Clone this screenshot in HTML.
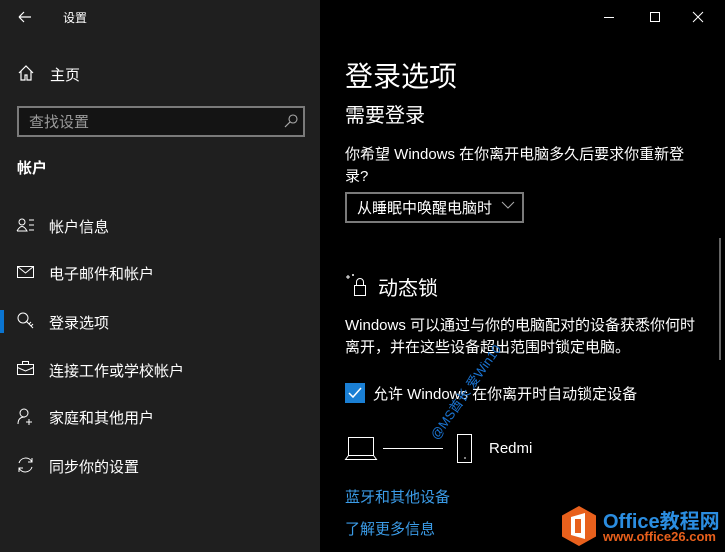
<!DOCTYPE html><html><head><meta charset="utf-8"><style>
*{margin:0;padding:0;box-sizing:border-box}
body{width:725px;height:552px;overflow:hidden;background:#000;font-family:"Liberation Sans","Noto Sans CJK SC",sans-serif;color:#fff;position:relative}
.a{position:absolute;white-space:nowrap}
#side{position:absolute;left:0;top:0;width:320px;height:552px;background:#1f1f1f}
.n{font-size:15px}
svg{position:absolute;overflow:visible}
.b{color:#3b9ce8;font-size:15px}
</style></head><body>
<div id="side">
<svg style="left:18px;top:10px" width="14" height="14"><path d="M1 7H13M1 7L6 2M1 7L6 12" stroke="#fff" stroke-width="1.2" fill="none"/></svg>
<div class="a" style="left:63px;top:9px;font-size:12px">设置</div>
<svg style="left:18px;top:65px" width="16" height="16"><path d="M1 8L8 1L15 8M3 6V15H7V10H9V15H13V6" stroke="#fff" stroke-width="1.2" fill="none"/></svg>
<div class="a n" style="left:50px;top:64px">主页</div>
<div class="a" style="left:17px;top:106px;width:288px;height:31px;border:2px solid #7a7a7a;background:#141414"></div>
<div class="a" style="left:29px;top:111px;font-size:15px;color:#9a9a9a">查找设置</div>
<svg style="left:284px;top:114px" width="14" height="14"><circle cx="9" cy="5" r="4" stroke="#aaa" stroke-width="1.1" fill="none"/><path d="M6 8L1 13" stroke="#aaa" stroke-width="1.2"/></svg>
<div class="a" style="left:17px;top:157px;font-size:15px;font-weight:bold">帐户</div>
<svg style="left:17px;top:218px" width="18" height="14"><circle cx="5" cy="4" r="3" stroke="#fff" fill="none"/><path d="M0 13Q5 4 10 13H0M12 2H17M12 7H17M12 12H17" stroke="#fff" fill="none"/></svg>
<div class="a n" style="left:49px;top:216px">帐户信息</div>
<svg style="left:17px;top:266px" width="17" height="12"><rect x=".5" y=".5" width="16" height="11" stroke="#fff" fill="none"/><path d="M.5 .5L8.5 7L16.5 .5" stroke="#fff" fill="none"/></svg>
<div class="a n" style="left:49px;top:263px">电子邮件和帐户</div>
<div class="a" style="left:0;top:310px;width:4px;height:23px;background:#0a74d0"></div>
<svg style="left:17px;top:312px" width="17" height="17"><circle cx="6" cy="6" r="5" stroke="#fff" fill="none"/><path d="M9 9L16 16M12 12L14 10M14 14L16 12" stroke="#fff" fill="none"/></svg>
<div class="a n" style="left:49px;top:312px">登录选项</div>
<svg style="left:17px;top:361px" width="17" height="14"><rect x=".5" y="3.5" width="16" height="10" stroke="#fff" fill="none"/><path d="M5.5 3.5V.5H11.5V3.5M.5 6.5L8.5 10L16.5 6.5" stroke="#fff" fill="none"/></svg>
<div class="a n" style="left:49px;top:360px">连接工作或学校帐户</div>
<svg style="left:17px;top:408px" width="17" height="17"><circle cx="7" cy="5" r="4" stroke="#fff" fill="none"/><path d="M1 16Q1 9 8 9M12 11V17M9 14H15" stroke="#fff" fill="none"/></svg>
<div class="a n" style="left:49px;top:407px">家庭和其他用户</div>
<svg style="left:17px;top:457px" width="17" height="16"><path d="M2 6A7 7 0 0 1 15 5M15 1V5H11M15 10A7 7 0 0 1 2 11M2 15V11H6" stroke="#fff" fill="none"/></svg>
<div class="a n" style="left:49px;top:456px">同步你的设置</div>
</div>
<svg style="left:604px;top:17px" width="10" height="1"><path d="M0 .5H10" stroke="#fff"/></svg>
<svg style="left:650px;top:12px" width="10" height="10"><rect x=".5" y=".5" width="9" height="9" stroke="#fff" fill="none"/></svg>
<svg style="left:693px;top:12px" width="10" height="10"><path d="M0 0L10 10M10 0L0 10" stroke="#fff"/></svg>
<div class="a" style="left:719px;top:238px;width:2px;height:122px;background:#666"></div>
<div class="a" style="left:345px;top:55px;font-size:28px">登录选项</div>
<div class="a" style="left:345px;top:99px;font-size:20px">需要登录</div>
<div class="a" style="left:345px;top:144px;font-size:15px;line-height:22px;white-space:normal;width:356px">你希望 Windows 在你离开电脑多久后要求你重新登录?</div>
<div class="a" style="left:345px;top:192px;width:179px;height:31px;border:2px solid #7a7a7a"></div>
<div class="a" style="left:357px;top:197px;font-size:15px">从睡眠中唤醒电脑时</div>
<svg style="left:502px;top:202px" width="12" height="7"><path d="M0 0L6 6L12 0" stroke="#aaa" fill="none"/></svg>
<svg style="left:345px;top:273px" width="24" height="24"><path d="M3 2V6M1 4H5M8 1V3M7 2H9" stroke="#fff" fill="none"/><rect x="9.5" y="12.5" width="11" height="10" stroke="#fff" fill="none"/><path d="M11.5 12.5V9A3.5 3.5 0 0 1 18.5 9V12.5" stroke="#fff" fill="none"/></svg>
<div class="a" style="left:378px;top:272px;font-size:20px">动态锁</div>
<div class="a" style="left:345px;top:315px;font-size:15px;line-height:22px;white-space:normal;width:356px">Windows 可以通过与你的电脑配对的设备获悉你何时离开，并在这些设备超出范围时锁定电脑。</div>
<div class="a" style="left:345px;top:383px;width:20px;height:20px;background:#1a7fd4"></div>
<svg style="left:348px;top:387px" width="14" height="12"><path d="M1 6L5 10L13 1" stroke="#fff" stroke-width="1.5" fill="none"/></svg>
<div class="a" style="left:373px;top:383px;font-size:15px">允许 Windows 在你离开时自动锁定设备</div>
<div class="a" style="left:425px;top:432px;font-size:13px;color:#1a73d0;transform:rotate(-55deg);transform-origin:left top">@MS酋长 爱Win10</div>
<svg style="left:345px;top:433px" width="120" height="30"><path d="M3.5 4.5H28.5V22.5H3.5ZM.5 26.5H31.5L28.5 22.5H3.5Z" stroke="#fff" fill="none"/><path d="M38 15.5H98" stroke="#fff"/><rect x="112.5" y="1.5" width="14" height="28" stroke="#fff" fill="none"/><path d="M119 25H121" stroke="#fff"/></svg>
<div class="a" style="left:489px;top:440px;font-size:15px">Redmi</div>
<div class="a b" style="left:345px;top:486px">蓝牙和其他设备</div>
<div class="a b" style="left:345px;top:518px">了解更多信息</div>
<svg style="left:561px;top:505px" width="36" height="42"><path d="M18 1L35 10.5V31.5L18 41L1 31.5V10.5Z" fill="#e8601c"/><path d="M10 12L24 8V34L10 30Z" fill="#fff"/><rect x="14" y="14" width="6" height="14" fill="#e8601c"/></svg>
<div class="a" style="left:603px;top:505px;font-size:20px;font-weight:bold;color:#2b8de0">Office教程网</div>
<div class="a" style="left:603px;top:529px;font-size:13px;font-weight:bold;color:#e8601c">www.office26.com</div>
</body></html>
